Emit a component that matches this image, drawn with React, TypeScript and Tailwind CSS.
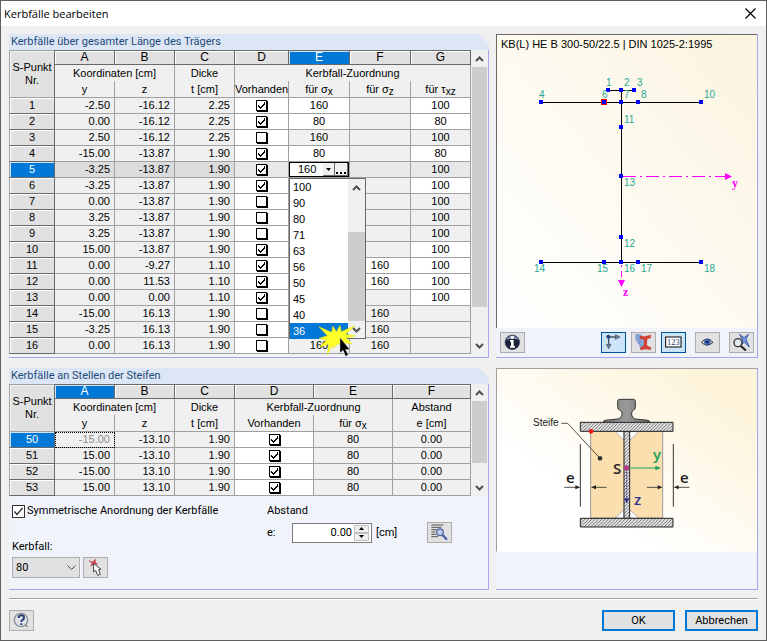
import { useState } from "react";
import type { ReactNode } from "react";
import { clsx } from "clsx";

type Row = {
  nr: number;
  y: string;
  z: string;
  t: string;
  on: boolean;
  sx: string;
  sz: string;
  txz: string;
  editX?: boolean;
  editZ?: boolean;
  editT?: boolean;
};

const rows: Row[] = [
  { nr: 1, y: "-2.50", z: "-16.12", t: "2.25", on: true, sx: "160", sz: "", txz: "100", editX: true, editT: true },
  { nr: 2, y: "0.00", z: "-16.12", t: "2.25", on: true, sx: "80", sz: "", txz: "80", editX: true, editT: true },
  { nr: 3, y: "2.50", z: "-16.12", t: "2.25", on: false, sx: "160", sz: "", txz: "100" },
  { nr: 4, y: "-15.00", z: "-13.87", t: "1.90", on: true, sx: "80", sz: "", txz: "80", editX: true, editT: true },
  { nr: 5, y: "-3.25", z: "-13.87", t: "1.90", on: true, sx: "160", sz: "", txz: "100" },
  { nr: 6, y: "-3.25", z: "-13.87", t: "1.90", on: true, sx: "", sz: "", txz: "100", editX: true, editT: true },
  { nr: 7, y: "0.00", z: "-13.87", t: "1.90", on: false, sx: "", sz: "", txz: "100" },
  { nr: 8, y: "3.25", z: "-13.87", t: "1.90", on: false, sx: "", sz: "", txz: "100" },
  { nr: 9, y: "3.25", z: "-13.87", t: "1.90", on: false, sx: "", sz: "", txz: "100" },
  { nr: 10, y: "15.00", z: "-13.87", t: "1.90", on: true, sx: "", sz: "", txz: "100", editX: true, editT: true },
  { nr: 11, y: "0.00", z: "-9.27", t: "1.10", on: true, sx: "", sz: "160", txz: "100", editX: true, editZ: true, editT: true },
  { nr: 12, y: "0.00", z: "11.53", t: "1.10", on: true, sx: "", sz: "160", txz: "100", editX: true, editZ: true, editT: true },
  { nr: 13, y: "0.00", z: "0.00", t: "1.10", on: true, sx: "", sz: "", txz: "100", editX: true, editT: true },
  { nr: 14, y: "-15.00", z: "16.13", t: "1.90", on: false, sx: "", sz: "160", txz: "" },
  { nr: 15, y: "-3.25", z: "16.13", t: "1.90", on: false, sx: "", sz: "160", txz: "" },
  { nr: 16, y: "0.00", z: "16.13", t: "1.90", on: false, sx: "160", sz: "160", txz: "" },
];

const stiffeners = [
  { nr: 50, y: "-15.00", z: "-13.10" },
  { nr: 51, y: "15.00", z: "-13.10" },
  { nr: 52, y: "-15.00", z: "13.10" },
  { nr: 53, y: "15.00", z: "13.10" },
];

const classes = ["100", "90", "80", "71", "63", "56", "50", "45", "40", "36"];

const GRID = "font-['Liberation_Sans',sans-serif] text-[11px]";
const CELL = "h-4 border-r border-b border-[#a0a0a0] p-0 leading-[15px]";
const HEAD_TOP = "h-4 border-r border-[#a0a0a0] p-0 leading-4";
const HEAD_SUB = "h-[17px] border-r border-b border-[#a0a0a0] p-0 leading-4";

function GridCheck({ checked, label }: { checked: boolean; label: string }) {
  const [on, setOn] = useState(checked);
  return (
    <span className="mx-auto grid w-[11px]">
      <input
        type="checkbox"
        aria-label={label}
        checked={on}
        onChange={() => setOn(!on)}
        className="col-start-1 row-start-1 h-[11px] w-[11px] appearance-none border border-black bg-white shadow-[1px_1px_0_#000]"
      />
      {on && (
        <svg viewBox="0 0 11 11" className="pointer-events-none col-start-1 row-start-1 h-[11px] w-[11px]" shapeRendering="crispEdges">
          <path d="M2 5h1v1h1v1h1v-1h1v-1h1v-1h1v-2h1v3h-1v1h-1v1h-1v1h-1v1h-1v-1h-1v-1h-1z" fill="#000" />
        </svg>
      )}
    </span>
  );
}

function ColHead({ letters, active }: { letters: string[]; active: string }) {
  return (
    <tr>
      <td
        rowSpan={3}
        className="border-t border-r border-b border-l border-[#a0a0a0] border-r-[#696969] bg-[#e1e1e1] p-0 text-center leading-[13px] shadow-[inset_1px_1px_0_#f4f4f4]"
      >
        S-Punkt
        <br />
        Nr.
      </td>
      {letters.map((l) => (
        <th
          key={l}
          scope="col"
          className={clsx(
            "h-[15px] border-t border-r border-b border-[#696969] p-0 text-xs font-normal leading-[13px]",
            l === active ? "bg-[#0078d7] text-white shadow-[inset_1px_1px_0_#cfe4f7]" : "bg-[#e1e1e1] shadow-[inset_1px_1px_0_#fff]"
          )}
        >
          {l}
        </th>
      ))}
    </tr>
  );
}

function RowHead({ nr, active }: { nr: number; active?: boolean }) {
  return (
    <th
      scope="row"
      className={clsx(
        "h-4 border-r border-b border-l border-[#696969] border-l-[#a0a0a0] p-0 font-normal leading-[15px]",
        active ? "bg-[#0078d7] text-white shadow-[inset_1px_1px_0_#cfe4f7]" : "bg-[#e1e1e1] shadow-[inset_1px_1px_0_#fff]"
      )}
    >
      {nr}
    </th>
  );
}

function Chevron({ up }: { up?: boolean }) {
  return (
    <svg viewBox="0 0 9 6" className="h-[6px] w-[9px]" fill="none" stroke="#505050" strokeWidth="2">
      <path d={up ? "M1 5L4.500 1.500L8 5" : "M1 1L4.500 4.500L8 1"} />
    </svg>
  );
}

function ScrollBar({ thumb, wrap }: { thumb: string; wrap?: string }) {
  return (
    <div className={clsx("flex shrink-0 flex-col bg-[#f0f0f0]", wrap ?? "ml-px w-[15px]")}>
      <div className="flex h-[17px] items-center justify-center">
        <Chevron up />
      </div>
      <div className="flex flex-1 flex-col">
        <div className={clsx("bg-[#cdcdcd]", thumb)} />
      </div>
      <div className="flex h-[17px] items-center justify-center">
        <Chevron />
      </div>
    </div>
  );
}

function Panel({ title, children, className }: { title: string; children: ReactNode; className?: string }) {
  return (
    <section className={clsx("flex flex-col border-r border-b border-[#a6a6ee] bg-[#f0f4fa]", className)}>
      <div className="-mr-px bg-[#f0f0f0]">
        <h2 className="h-4 bg-[#dce6f4] pl-0.5 text-[11px] leading-4 text-[#1e4b7b] [clip-path:polygon(0_0,calc(100%-10px)_0,100%_10px,100%_100%,0_100%)]">
          {title}
        </h2>
      </div>
      {children}
    </section>
  );
}

function Sub({ base, sub }: { base: string; sub: string }) {
  return (
    <>
      für {base}
      <span className="relative top-0.5 text-[10px] leading-none">{sub}</span>
    </>
  );
}

function IconButton({ label, active, children }: { label: string; active?: boolean; children: ReactNode }) {
  return (
    <button
      type="button"
      aria-label={label}
      className={clsx(
        "h-[21px] w-[25px] shrink-0 border",
        active ? "border-[#005499] bg-[#cce4f7]" : "border-[#adadad] bg-[#e1e1e1]"
      )}
    >
      <svg viewBox="0 0 69 57" className="h-[19px] w-[23px]">
        {children}
      </svg>
    </button>
  );
}

function ClassPicker() {
  const [value, setValue] = useState("36");
  return (
    <div className="absolute top-4 left-0 z-10 flex h-[161px] w-[77px] border border-[#696969] bg-white">
      <ul role="listbox" aria-label="Kerbfall für σx" className="flex-1 text-left">
        {classes.map((c) => (
          <li
            key={c}
            role="option"
            aria-selected={c === value}
            onClick={() => setValue(c)}
            className={clsx("h-4 pl-[3px] leading-4", c === value && "bg-[#0078d7] text-white")}
          >
            {c}
          </li>
        ))}
      </ul>
      <ScrollBar wrap="w-[17px]" thumb="mt-9 flex-1" />
      <svg viewBox="0 0 110 100" className="pointer-events-none absolute top-[146px] left-7 h-[35px] w-[39px]">
        <path
          d="M2 5L38 21L42 3L52 20L62 1L66 19L104 2L78 27L106 31L80 38L97 54L76 51L70 62L58 53L42 66L40 56L26 86L30 55L4 63L24 43L2 38L26 31z"
          fill="#ffff2a"
          stroke="#e6dc00"
          strokeWidth="1.500"
        />
        <path d="M62 36V80L71 72L78 89L86 86L78 70H90z" fill="#000" stroke="#fff" strokeWidth="1" />
      </svg>
    </div>
  );
}

function BeamTable() {
  return (
    <div className="flex bg-[#f0f0f0] pr-px">
      <table className={clsx(GRID, "w-full table-fixed border-separate border-spacing-0 bg-[#f0f0f0] text-black")}>
        <colgroup>
          <col className="w-[46px]" />
          <col className="w-[60px]" />
          <col className="w-[60px]" />
          <col className="w-[60px]" />
          <col className="w-[54px]" />
          <col className="w-[61px]" />
          <col className="w-[61px]" />
          <col className="w-[60px]" />
        </colgroup>
        <thead>
          <ColHead letters={["A", "B", "C", "D", "E", "F", "G"]} active="E" />
          <tr className="text-center">
            <td colSpan={2} className={HEAD_TOP}>Koordinaten [cm]</td>
            <td className={HEAD_TOP}>Dicke</td>
            <td colSpan={4} className={HEAD_TOP}>Kerbfall-Zuordnung</td>
          </tr>
          <tr className="text-center">
            {["y", "z", "t [cm]", "Vorhanden"].map((h) => (
              <td key={h} className={HEAD_SUB}>{h}</td>
            ))}
            <td className={HEAD_SUB}><Sub base="σ" sub="x" /></td>
            <td className={HEAD_SUB}><Sub base="σ" sub="z" /></td>
            <td className={HEAD_SUB}><Sub base="τ" sub="xz" /></td>
          </tr>
        </thead>
        <tbody>
          {rows.map((r) => (
            <tr key={r.nr} className={clsx(r.nr === 5 && "bg-[#dcdcdc]")}>
              <RowHead nr={r.nr} active={r.nr === 5} />
              <td className={clsx(CELL, "pr-1 text-right")}>{r.y}</td>
              <td className={clsx(CELL, "pr-1 text-right")}>{r.z}</td>
              <td className={clsx(CELL, "pr-1 text-right")}>{r.t}</td>
              <td className={clsx(CELL, r.nr === 5 ? "bg-[#e8e8e8]" : "bg-white")}>
                <GridCheck checked={r.on} label={`Vorhanden ${r.nr}`} />
              </td>
              {r.nr === 5 ? (
                <td className={clsx(CELL, "relative bg-white")}>
                  <div className="flex h-[15px] border border-black">
                    <span className="flex-1 pl-2 text-left leading-[13px]">{r.sx}</span>
                    <button type="button" aria-label="Auswahl öffnen" className="flex w-3 items-center justify-center border-r border-b border-[#696969] bg-[#f0f0f0]">
                      <svg viewBox="0 0 5 3" className="h-[3px] w-[5px]"><path d="M0 0h5L2.500 3z" /></svg>
                    </button>
                    <button type="button" aria-label="Bibliothek" className="flex w-[13px] items-end justify-center border-r border-b border-[#696969] bg-[#f0f0f0] pb-px">
                      <svg viewBox="0 0 10 2" className="h-0.5 w-2.5"><path d="M0 0h2v2H0zM4 0h2v2H4zM8 0h2v2H8z" /></svg>
                    </button>
                  </div>
                  <ClassPicker />
                </td>
              ) : (
                <td className={clsx(CELL, "text-center", r.editX && "bg-white")}>{r.sx}</td>
              )}
              <td className={clsx(CELL, "text-center", r.editZ && "bg-white", r.nr === 5 && "bg-[#e8e8e8]")}>{r.sz}</td>
              <td className={clsx(CELL, "text-center", r.editT && "bg-white", r.nr === 5 && "bg-[#e8e8e8]")}>{r.txz}</td>
            </tr>
          ))}
        </tbody>
      </table>
      <ScrollBar thumb="h-60" />
    </div>
  );
}

function StiffenerTable() {
  return (
    <div className="flex bg-[#f0f0f0] pr-px">
      <table className={clsx(GRID, "w-full table-fixed border-separate border-spacing-0 bg-[#f0f0f0] text-black")}>
        <colgroup>
          <col className="w-[46px]" />
          <col className="w-[60px]" />
          <col className="w-[60px]" />
          <col className="w-[60px]" />
          <col className="w-[79px]" />
          <col className="w-[79px]" />
          <col className="w-[78px]" />
        </colgroup>
        <thead>
          <ColHead letters={["A", "B", "C", "D", "E", "F"]} active="A" />
          <tr className="text-center">
            <td colSpan={2} className={HEAD_TOP}>Koordinaten [cm]</td>
            <td className={HEAD_TOP}>Dicke</td>
            <td colSpan={2} className={HEAD_TOP}>Kerbfall-Zuordnung</td>
            <td className={HEAD_TOP}>Abstand</td>
          </tr>
          <tr className="text-center">
            {["y", "z", "t [cm]", "Vorhanden"].map((h) => (
              <td key={h} className={HEAD_SUB}>{h}</td>
            ))}
            <td className={HEAD_SUB}><Sub base="σ" sub="x" /></td>
            <td className={HEAD_SUB}>e [cm]</td>
          </tr>
        </thead>
        <tbody>
          {stiffeners.map((s) => (
            <tr key={s.nr}>
              <RowHead nr={s.nr} active={s.nr === 50} />
              <td className={clsx(CELL, "pr-1 text-right", s.nr === 50 && "text-[#8c8c8c] outline-1 -outline-offset-1 outline-dotted outline-black")}>{s.y}</td>
              <td className={clsx(CELL, "pr-1 text-right")}>{s.z}</td>
              <td className={clsx(CELL, "pr-1 text-right")}>1.90</td>
              <td className={clsx(CELL, "bg-white")}>
                <GridCheck checked label={`Vorhanden ${s.nr}`} />
              </td>
              <td className={clsx(CELL, "text-center")}>80</td>
              <td className={clsx(CELL, "text-center")}>0.00</td>
            </tr>
          ))}
        </tbody>
      </table>
      <ScrollBar thumb="h-[62px]" />
    </div>
  );
}

const points: [number, number][] = [
  [111, 55], [124, 55], [137, 55], [44, 67], [107, 67], [124, 67], [141, 67], [204, 67],
  [124, 92], [124, 141], [124, 202], [44, 227], [107, 227], [124, 227], [141, 227], [204, 227],
];

const pointLabels: [string, number, number][] = [
  ["1", 109, 51], ["2", 127, 51], ["3", 140, 51], ["4", 42, 63], ["6", 105, 63], ["7", 127, 63], ["8", 144, 63], ["10", 207, 63],
  ["11", 127, 88], ["13", 127, 151], ["12", 127, 212], ["14", 37, 237], ["15", 100, 237], ["16", 127, 237], ["17", 144, 237], ["18", 207, 237],
];

function SectionView() {
  return (
    <svg width="260" height="293" className="block font-['Liberation_Sans',sans-serif]">
      <g stroke="#000" shapeRendering="crispEdges">
        <path d="M111 55.500H137M44 67.500H204M44 227.500H204M124.500 55V227" />
      </g>
      <g stroke="#f0f" fill="none" shapeRendering="crispEdges">
        <path d="M126 141.500H228" strokeDasharray="13 4 2 4" />
        <path d="M124.500 230V246" strokeDasharray="2 4 6 4" />
      </g>
      <path d="M228 138v7l7-3.500zM121 245h7l-3.500 7z" fill="#f0f" />
      <rect x="104" y="64" width="6" height="6" fill="#f00" />
      {points.map(([x, y]) => (
        <rect key={`${x}-${y}`} x={x - 2} y={y - 2} width="4" height="4" fill="#00f" />
      ))}
      <g fontSize="10" fill="#1fa896">
        {pointLabels.map(([t, x, y]) => (
          <text key={t} x={x} y={y}>{t}</text>
        ))}
      </g>
      <g fontSize="12" fill="#f0f" className="font-['Liberation_Serif',serif] font-bold">
        <text x="235" y="152">y</text>
        <text x="126" y="261">z</text>
      </g>
    </svg>
  );
}

function StiffenerSketch() {
  return (
    <svg width="260" height="182" className="block font-['Open_Sans',sans-serif]">
      <defs>
        <pattern id="hatch" width="10" height="10" patternUnits="userSpaceOnUse">
          <rect width="10" height="10" fill="#e6e6e6" />
          <path d="M-1 11L11 -1M-1 1L1 -1M9 11L11 9" stroke="#444" strokeWidth="2.200" />
        </pattern>
        <linearGradient id="rail" x1="0" x2="1">
          <stop offset="0" stopColor="#767676" />
          <stop offset=".5" stopColor="#9a9a9a" />
          <stop offset="1" stopColor="#6c6c6c" />
        </linearGradient>
      </defs>
      <g transform="translate(-7 -8) scale(.33333)">
        <path d="M302 211H518V471H302z" fill="#fbdfae" stroke="#999" strokeWidth="3" />
        <path d="M376 212L402 238V212zM446 212L419 238V212zM376 471L402 446V471zM446 471L419 446V471z" fill="#fff" stroke="#999" strokeWidth="2" />
        <path d="M402 211H419V472H402z" fill="url(#hatch)" stroke="#222" strokeWidth="3" />
        <path d="M271 184H549V211H271zM271 472H549V498H271z" fill="url(#hatch)" stroke="#222" strokeWidth="3" />
        <path
          d="M389 115H430Q436 115 436 121V140Q436 144 431 147Q425 151 425 156V162Q426 171 436 174L474 178Q479 179 479 184H340Q340 179 345 178L384 174Q395 171 396 162V156Q396 151 389 147Q383 144 383 140V121Q383 115 389 115z"
          fill="url(#rail)"
          stroke="#333"
          strokeWidth="3"
        />
        <path d="M271 249V437M550 249V437" stroke="#333" strokeWidth="3" />
        <path d="M223 379H260M350 379H314M471 379H508M598 379H562M214 187H233L330 292" fill="none" stroke="#333" strokeWidth="2.500" />
        <path d="M256 373V385L271 379zM318 373V385L303 379zM503 373V385L518 379zM566 373V385L551 379z" fill="#222" />
        <circle cx="330" cy="292" r="7" fill="#333" />
        <circle cx="303" cy="211" r="7" fill="#f01414" />
        <path d="M410 321H500" stroke="#1aa355" strokeWidth="3" />
        <path d="M496 314V328L513 321z" fill="#1aa355" />
        <path d="M410 325V410" stroke="#34318c" strokeWidth="3" strokeDasharray="5 3" />
        <path d="M402 412H419L410 427z" fill="#34318c" />
        <circle cx="410" cy="321" r="8" fill="#b33a87" />
      </g>
      <text x="36" y="57" fontSize="10" fill="#222" className="font-['Liberation_Sans',sans-serif]">Steife</text>
      <g fontSize="15" fill="#222" className="font-semibold">
        <text x="69" y="114">e</text>
        <text x="183" y="114">e</text>
        <text x="116" y="105">S</text>
        <text x="156" y="91" fill="#1aa355">y</text>
        <text x="137" y="136" fill="#34318c">z</text>
      </g>
    </svg>
  );
}

export default function App() {
  const [symmetric, setSymmetric] = useState(true);

  return (
    <div className="flex min-h-screen flex-col border border-[#5f5f5f] bg-[#f0f0f0] font-['Roboto',sans-serif] text-[11px] text-black">
      <header className="flex h-[25px] items-center justify-between bg-white pr-2 pl-[3px]">
        <h1 className="font-['Open_Sans','Noto_Sans',sans-serif] text-[11px] leading-6">Kerbfälle bearbeiten</h1>
        <button type="button" aria-label="Schließen" className="flex h-6 w-4 items-center justify-center">
          <svg viewBox="0 0 11 11" className="h-[11px] w-[11px]" stroke="#000" strokeWidth="1.200">
            <path d="M.5 .5L10.500 10.500M10.500 .5L.5 10.500" />
          </svg>
        </button>
      </header>

      <main className="flex gap-[7px] px-2 pt-2">
        <div className="flex flex-1 flex-col gap-[10px]">
          <Panel title="Kerbfälle über gesamter Länge des Trägers" className="h-[324px]">
            <BeamTable />
          </Panel>

          <Panel title="Kerbfälle an Stellen der Steifen" className="h-[222px]">
            <StiffenerTable />
            <div className="grid grid-cols-[255px_1fr] pt-[7px] pl-[3px] leading-4">
              <div className="flex flex-col">
                <label className="flex items-center gap-0.5">
                  <span className="grid">
                    <input
                      type="checkbox"
                      checked={symmetric}
                      onChange={() => setSymmetric(!symmetric)}
                      className="col-start-1 row-start-1 h-[13px] w-[13px] appearance-none border border-[#333] bg-white"
                    />
                    {symmetric && (
                      <svg viewBox="0 0 13 13" className="pointer-events-none col-start-1 row-start-1 h-[13px] w-[13px]" fill="none" stroke="#222" strokeWidth="1.200">
                        <path d="M2.500 6.500L5 9.500L10.500 3" />
                      </svg>
                    )}
                  </span>
                  Symmetrische Anordnung der Kerbfälle
                </label>
                <label htmlFor="kerbfall" className="mt-5">Kerbfall:</label>
                <div className="flex items-center gap-[3px] pt-0.5">
                  <div className="grid items-center">
                    <select id="kerbfall" defaultValue="80" className="col-start-1 row-start-1 h-[21px] w-[68px] appearance-none border border-[#adadad] bg-[#e1e1e1] pl-[3px]">
                      {classes.map((c) => (
                        <option key={c}>{c}</option>
                      ))}
                    </select>
                    <svg viewBox="0 0 9 6" className="pointer-events-none col-start-1 row-start-1 mr-1 h-[6px] w-[9px] justify-self-end" fill="none" stroke="#444" strokeWidth="1">
                      <path d="M.5 .5L4.500 4.500L8.500 .5" />
                    </svg>
                  </div>
                  <IconButton label="Kerbfall zuweisen">
                    <path d="M14 8L26 11L36 3L34 13L42 20L31 17L20 25L24 15z" fill="#d4434f" stroke="#b02c3a" strokeWidth="1" />
                    <path d="M28 16L29 42L35 37L41 52L49 49L44 35L51 34z" fill="#fff" stroke="#444" strokeWidth="3" />
                  </IconButton>
                </div>
              </div>
              <div className="flex flex-col">
                <span>Abstand</span>
                <div className="flex items-center pt-[3px]">
                  <label htmlFor="abstand" className="w-[25px]">e:</label>
                  <div className="flex h-5 w-20 items-center border border-[#7a7a7a] bg-white pr-0.5">
                    <input id="abstand" defaultValue="0.00" className="w-0 flex-1 bg-transparent pr-0.5 text-right outline-none" />
                    <div className="flex flex-col">
                      <button type="button" aria-label="Mehr" className="flex h-2 w-[15px] items-center justify-center border border-[#c0c0c0] bg-[#f0f0f0]">
                        <svg viewBox="0 0 5 3" className="h-[3px] w-[5px]"><path d="M0 3h5L2.500 0z" /></svg>
                      </button>
                      <button type="button" aria-label="Weniger" className="flex h-2 w-[15px] items-center justify-center border border-[#c0c0c0] bg-[#f0f0f0]">
                        <svg viewBox="0 0 5 3" className="h-[3px] w-[5px]"><path d="M0 0h5L2.500 3z" /></svg>
                      </button>
                    </div>
                  </div>
                  <span className="w-[55px] pl-1">[cm]</span>
                  <IconButton label="Details">
                    <path d="M10 6H46M10 13H40M10 20H26M10 27H22M10 34H24M10 41H30" stroke="#555" strokeWidth="3" />
                    <path d="M44 36L55 48" stroke="#4a5fb0" strokeWidth="7" strokeLinecap="round" />
                    <circle cx="36" cy="28" r="10" fill="#b9cdf0" stroke="#5b6a9c" strokeWidth="4" />
                  </IconButton>
                </div>
              </div>
            </div>
          </Panel>
        </div>

        <div className="flex w-[263px] flex-col gap-[10px]">
          <section className="flex h-[324px] flex-col border-r border-b border-[#a6a6ee] bg-[#f0f4fa]">
            <div className="h-[294px] border-t border-l border-[#696969] bg-linear-to-tr from-white via-[#fdfaf0] to-[#faf3df]">
              <div className="grid">
                <p className="col-start-1 row-start-1 pt-0.5 pl-1 font-['Liberation_Sans',sans-serif] text-[11px] leading-[14px]">
                  KB(L) HE B 300-50/22.5 | DIN 1025-2:1995
                </p>
                <div className="col-start-1 row-start-1">
                  <SectionView />
                </div>
              </div>
            </div>
            <div className="flex items-center pt-1 pr-[3px] pl-1">
              <IconButton label="Info">
                <circle cx="34" cy="28" r="22" fill="#1c2138" stroke="#4b5478" strokeWidth="2" />
                <path d="M15 22A20 20 0 0 1 53 22Q40 12 15 22z" fill="#7a86b0" />
                <path d="M34 8a5 5 0 1 1-.1 0zM27 21H38V39H42V44H27V39H30V26H27z" fill="#fff" />
              </IconButton>
              <div className="ml-auto flex items-center gap-[5px]">
                <IconButton label="Achsen" active>
                  <path d="M20 12H44M20 12V38" stroke="#4a525e" strokeWidth="4" />
                  <path d="M40 5L54 12L40 19zM13 34L20 47L27 34z" fill="#6c7c94" stroke="#444c5a" strokeWidth="2" />
                  <circle cx="19" cy="11" r="6" fill="#27437e" />
                </IconButton>
                <IconButton label="Querschnitt">
                  <path d="M11 3H28L30 14L40 18L36 42L26 50L20 34L10 20z" fill="#8fabdc" />
                  <path d="M11 3L26 14M11 12L30 28M16 26L32 40" stroke="#5878b4" strokeWidth="2" />
                  <path d="M24 9Q40 13 56 6V15Q46 15 45 20L44 36Q46 42 56 42V50Q40 46 26 51V43Q35 42 36 36L37 22Q36 17 24 17z" fill="#d8402f" stroke="#9b2a22" strokeWidth="1" />
                </IconButton>
                <IconButton label="Nummerierung" active>
                  <rect x="11" y="12" width="46" height="30" fill="#fff" stroke="#000" strokeWidth="3" />
                  <text x="34" y="35" fontSize="25" textAnchor="middle" fill="#24345c" className="font-['Liberation_Serif',serif]">123</text>
                </IconButton>
                <div className="flex px-1">
                  <IconButton label="Ansicht">
                    <path d="M16 28Q34 8 51 28Q34 45 16 28z" fill="#dfe6f2" stroke="#333" strokeWidth="3" />
                    <circle cx="34" cy="27" r="9" fill="#4a74cc" stroke="#2a3f80" strokeWidth="2" />
                    <circle cx="34" cy="27" r="4" fill="#0c1430" />
                  </IconButton>
                </div>
                <IconButton label="Zoom">
                  <path d="M28 4L42 14L56 4L48 18L58 42L43 28L32 36L37 20z" fill="#6f97e4" stroke="#2f4f98" strokeWidth="2.500" />
                  <path d="M32 38L46 51" stroke="#222" strokeWidth="6" strokeLinecap="round" />
                  <circle cx="24" cy="29" r="12" fill="#e4ecf6" fillOpacity=".7" stroke="#333" strokeWidth="4" />
                </IconButton>
              </div>
            </div>
          </section>

          <section className="h-[222px] border-r border-b border-[#a6a6ee] bg-[#f0f4fa]">
            <div className="border-t border-b border-l border-[#a0a0a0] border-b-white bg-linear-to-tr from-white from-30% to-[#fdf3d8] to-90%">
              <StiffenerSketch />
            </div>
          </section>
        </div>
      </main>

      <footer className="mx-2 mt-2 flex items-center border-t border-[#a0a0a0] pt-[11px] pb-2 shadow-[inset_0_1px_0_#fff]">
        <IconButton label="Hilfe">
          <circle cx="33" cy="27" r="20" fill="#dfe3ea" stroke="#8b8f98" strokeWidth="4" />
          <path d="M44 44L54 50L50 38z" fill="#8b8f98" />
          <path d="M26 21Q26 13 34 13Q42 13 42 20Q42 25 37 27Q34 29 34 33M34 37V42" fill="none" stroke="#2c3f77" strokeWidth="6" />
        </IconButton>
        <div className="ml-auto flex gap-[10px]">
          <button type="button" className="h-[21px] w-[73px] border-2 border-[#0078d7] bg-[#e1e1e1] leading-4">OK</button>
          <button type="button" className="h-[21px] w-[73px] border-2 border-[#0078d7] bg-[#e1e1e1] leading-4">Abbrechen</button>
        </div>
      </footer>
    </div>
  );
}
